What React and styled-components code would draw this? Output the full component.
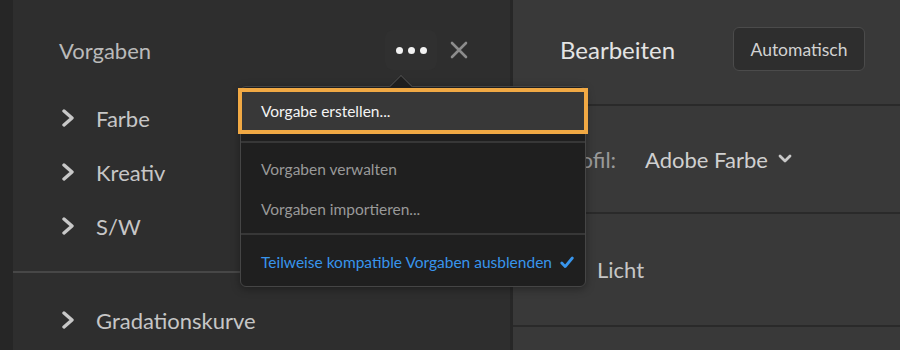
import React from 'react';
import styled, { createGlobalStyle } from 'styled-components';

const Global = createGlobalStyle`
  html, body { margin: 0; padding: 0; background: #262626; }
  body { font-family: Lato, "Open Sans", sans-serif; -webkit-font-smoothing: antialiased; }
  * { box-sizing: border-box; }
`;

const Screen = styled.div`
  position: relative;
  display: flex;
  width: 900px;
  height: 350px;
  overflow: hidden;
  background: #262626;
`;

const Rail = styled.div`
  width: 13px;
  flex: none;
  background: #262626;
`;

const LeftPanel = styled.section`
  width: 497px;
  flex: none;
  background: #2e2e2e;
  display: flex;
  flex-direction: column;
`;

const Splitter = styled.div`
  width: 3px;
  flex: none;
  background: #272727;
`;

const RightPanel = styled.section`
  flex: 1;
  background: #393939;
  display: flex;
  flex-direction: column;
`;

const PanelHeader = styled.header`
  height: 91px;
  padding: 9px 42px 0 46px;
  display: flex;
  align-items: center;
`;

const PanelTitle = styled.h2`
  flex: 1;
  margin: 0;
  font-size: 22px;
  font-weight: 400;
  color: #bababa;
`;

const DotsButton = styled.div`
  width: 52px;
  height: 40px;
  border-radius: 8px;
  background: #303030;
  display: flex;
  align-items: center;
  justify-content: center;
  gap: 5px;
  margin-right: 13px;
`;

const Dot = styled.span`
  width: 7px;
  height: 7px;
  border-radius: 50%;
  background: #f2f2f2;
`;

const CloseIcon = styled.svg`
  width: 18px;
  height: 18px;
  display: block;
`;

const TreeRow = styled.div`
  height: ${p => p.$h || 54}px;
  padding-left: ${p => p.$indent}px;
  display: flex;
  align-items: center;
  gap: 22px;
  font-size: 22px;
  color: #c6c6c6;
`;

const Chevron = styled.svg`
  width: 12px;
  height: 18px;
  flex: none;
  display: block;
`;

const SectionRule = styled.div`
  height: 2px;
  margin: 18px 0 20px;
  background: #474747;
`;

const EditHeader = styled.header`
  height: 104px;
  padding: 0 35px 6px 47px;
  display: flex;
  align-items: center;
  justify-content: space-between;
`;

const EditTitle = styled.h1`
  margin: 0;
  font-size: 24px;
  font-weight: 400;
  color: #e4e4e4;
`;

const AutoButton = styled.button`
  width: 132px;
  height: 44px;
  border: 1.5px solid #4b4b4b;
  border-radius: 6px;
  background: #2e2e2e;
  color: #d2d2d2;
  font-family: inherit;
  font-size: 17.5px;
  padding: 0;
`;

const HRule = styled.div`
  height: 2px;
  flex: none;
  background: #2a2a2a;
`;

const ProfileRow = styled.div`
  height: 106px;
  padding-left: 47px;
  display: flex;
  align-items: center;
  font-size: 22px;
`;

const ProfileLabel = styled.span`
  color: #9a9a9a;
  margin-right: 29px;
`;

const ProfileValue = styled.span`
  color: #d0d0d0;
  display: flex;
  align-items: center;
  gap: 10px;
`;

const Menu = styled.div`
  position: absolute;
  left: 240px;
  top: 86px;
  width: 346px;
  background: #1f1f1f;
  border: 1px solid #454545;
  border-radius: 6px;
  padding: 1px 0 4px;
  box-shadow: 0 2px 8px rgba(0, 0, 0, 0.35);

  &::before {
    content: '';
    position: absolute;
    z-index: 2;
    left: 152px;
    top: -9px;
    width: 15px;
    height: 15px;
    background: #1f1f1f;
    border-top: 1px solid #4a4a4a;
    border-left: 1px solid #4a4a4a;
    transform: rotate(45deg);
  }
`;

const FocusedItem = styled.div`
  position: relative;
  z-index: 3;
  margin: 0 -3px;
  height: 46px;
  border: 4px solid #f1a944;
  background: #383838;
  display: flex;
  align-items: center;
  padding-left: 19px;
  font-size: 15.5px;
  color: #f4f4f4;
`;

const MenuRule = styled.div`
  height: 2px;
  background: #373737;
  margin: ${p => p.$m};
`;

const MenuItem = styled.div`
  height: 40px;
  display: flex;
  align-items: center;
  gap: 8px;
  padding-left: 20px;
  font-size: 15.5px;
  color: ${p => (p.$active ? '#3895ec' : '#999999')};
`;

const ChevronRight = () => (
  <Chevron viewBox="0 0 12 18">
    <path d="M2 2 L10 9 L2 16" fill="none" stroke="#c8c8c8" strokeWidth="3.4" strokeLinecap="round" strokeLinejoin="round" />
  </Chevron>
);

export default function App() {
  return (
    <Screen>
      <Global />
      <Rail />
      <LeftPanel>
        <PanelHeader>
          <PanelTitle>Vorgaben</PanelTitle>
          <DotsButton>
            <Dot />
            <Dot />
            <Dot />
          </DotsButton>
          <CloseIcon viewBox="0 0 18 18">
            <path d="M2 2 L16 16 M16 2 L2 16" stroke="#8c8c8c" strokeWidth="2.6" strokeLinecap="round" />
          </CloseIcon>
        </PanelHeader>
        <TreeRow $indent={49}><ChevronRight />Farbe</TreeRow>
        <TreeRow $indent={49}><ChevronRight />Kreativ</TreeRow>
        <TreeRow $indent={49}><ChevronRight />S/W</TreeRow>
        <SectionRule />
        <TreeRow $indent={49}><ChevronRight />Gradationskurve</TreeRow>
      </LeftPanel>
      <Splitter />
      <RightPanel>
        <EditHeader>
          <EditTitle>Bearbeiten</EditTitle>
          <AutoButton>Automatisch</AutoButton>
        </EditHeader>
        <HRule />
        <ProfileRow>
          <ProfileLabel>Profil:</ProfileLabel>
          <ProfileValue>
            Adobe Farbe
            <svg width="14" height="10" viewBox="0 0 14 10">
              <path d="M2 2 L7 7 L12 2" fill="none" stroke="#c8c8c8" strokeWidth="2.8" strokeLinecap="round" strokeLinejoin="round" />
            </svg>
          </ProfileValue>
        </ProfileRow>
        <HRule />
        <TreeRow $indent={50} $h={111}><ChevronRight />Licht</TreeRow>
        <HRule />
      </RightPanel>

      <Menu>
        <FocusedItem>Vorgabe erstellen...</FocusedItem>
        <MenuRule $m="7px 0 6px" />
        <MenuItem>Vorgaben verwalten</MenuItem>
        <MenuItem>Vorgaben importieren...</MenuItem>
        <MenuRule $m="4px 0 7px" />
        <MenuItem $active>
          Teilweise kompatible Vorgaben ausblenden
          <svg width="14" height="13" viewBox="0 0 14 13">
            <path d="M1.8 7 L5.2 10.6 L12.3 2" fill="none" stroke="#3895ec" strokeWidth="2.8" strokeLinecap="round" strokeLinejoin="round" />
          </svg>
        </MenuItem>
      </Menu>
    </Screen>
  );
}
